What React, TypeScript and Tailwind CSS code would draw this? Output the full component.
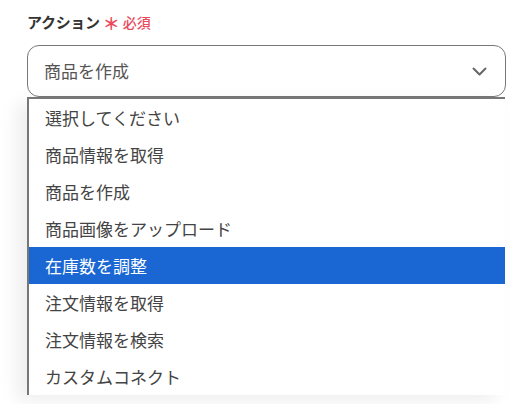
import React from 'react';

const options = [
  '選択してください',
  '商品情報を取得',
  '商品を作成',
  '商品画像をアップロード',
  '在庫数を調整',
  '注文情報を取得',
  '注文情報を検索',
  'カスタムコネクト',
];

const App: React.FC = () => {
  const selected = '商品を作成';
  const highlighted = '在庫数を調整';

  return (
    <div
      className="w-[517px] h-[404px] overflow-hidden bg-white pl-[27px] pt-[13px]"
      style={{ fontFamily: '"Noto Sans CJK JP", "Noto Sans", sans-serif' }}
    >
      <div className="flex items-center h-[19px] mb-[13px]">
        <span className="text-[15px] font-bold text-[#333] tracking-[-0.3px]">アクション</span>
        <span className="ml-[3px] text-[17px] font-bold text-[#e94b5d] leading-none">＊</span>
        <span className="ml-[3px] text-[14px] font-medium text-[#e94b5d]">必須</span>
      </div>

      <div className="w-[479px] h-[52px] rounded-[12px] border border-[#777] flex items-center justify-between pl-[16px] pr-[18px]">
        <span className="text-[17px] text-[#555]">{selected}</span>
        <svg width="15" height="9" viewBox="0 0 15 9" fill="none">
          <path d="M1.5 1.5 L7.5 7.5 L13.5 1.5" stroke="#666" strokeWidth="2" strokeLinecap="round" strokeLinejoin="round" />
        </svg>
      </div>

      <ul className="w-[478px] border-l-2 border-t-2 border-[#777] bg-white shadow-[-10px_6px_18px_rgba(0,0,0,0.07)]">
        {options.map((opt) => (
          <li
            key={opt}
            className={`h-[37px] flex items-center pl-[16px] text-[17px] ${
              opt === highlighted ? 'bg-[#1a67d3] text-white' : 'text-[#444]'
            }`}
          >
            {opt}
          </li>
        ))}
      </ul>
    </div>
  );
};

export default App;
